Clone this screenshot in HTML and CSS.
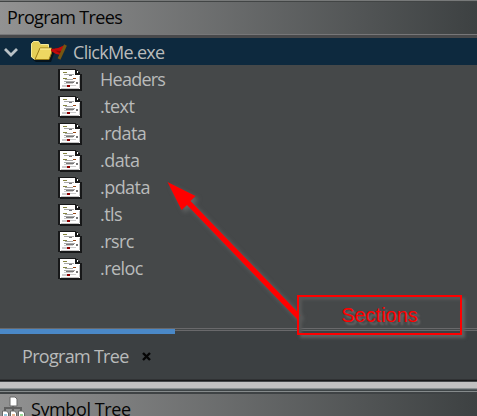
FILE: index.html
```html
<!DOCTYPE html>
<html lang="en">
<head>
<meta charset="utf-8">
<title>Program Trees</title>
<link rel="stylesheet" href="styles.css">
</head>
<body>
<svg class="defs" width="0" height="0" aria-hidden="true">
  <symbol id="doc" viewBox="0 0 24 22" shape-rendering="crispEdges">
    <path fill="#171819" d="M0 0h18v1h2v2h2v2h2v17H2v-1H0z"/>
    <path fill="#fff" d="M2 1h15v5h5v14H2z"/>
    <path fill="#fff" d="M19 2h1v2h-1z"/>
    <path fill="#c5c5c5" d="M3 19h18v1H3zM21 7h1v12h-1z"/>
    <path fill="#858440" d="M5 3h4v1H5zM5 9h4v1H5z"/>
    <path fill="#a8a8a8" d="M6 5h10v1H6zM7 10h8v1H7zM6 12h11v1H6z"/>
    <path fill="#777" d="M11 6h3v1h-3zM8 13h8v1H8zM18 13h2v2h-2z"/>
    <path fill="#ccc" d="M6 14h9v1H6zM4 16h5v2H4zM12 16h6v1h-6z"/>
    <path fill="#954615" d="M15 9h3v1h-3z"/>
    <path fill="#8e0000" d="M9 16h3v2H9z"/>
  </symbol>
</svg>
<div class="window">
  <header class="title title-top"><span class="t-program">Program Trees</span></header>
  <main class="tree">
    <div class="root">
      <svg class="chevron" width="16" height="12" viewBox="0 0 16 12"><path d="M2 3l6 6 6-6" fill="none" stroke="#b9c1c6" stroke-width="2.8"/></svg>
      <svg class="folder" width="38" height="22" viewBox="0 0 38 22">
        <path d="M2 19l3 2h15l4-11v-3z" fill="#07131b"/>
        <path d="M.5 2.500l2-2h5l2 3h8v15H4L.5 16z" fill="#e5cf57" stroke="#f6eb9b"/>
        <path d="M4 18.500L9 7h11.500v5L18 18.500z" fill="#eed761" stroke="#9a7b13"/>
        <path d="M9 8h11" stroke="#fff3a5"/>
        <path d="M20 8l7-1 7-3-4 10-5-1-5-3z" fill="#c30a0a"/>
        <path d="M24 9.500l6 3.500 1-3z" fill="#830909"/>
        <path d="M34.500 4l-6.500 14" stroke="#765711" stroke-width="3"/>
      </svg>
      <span class="t-root">ClickMe.exe</span>
    </div>
    <ul class="items">
      <li><svg class="doc"><use href="#doc"/></svg><span class="t-headers">Headers</span></li>
      <li><svg class="doc"><use href="#doc"/></svg><span>.text</span></li>
      <li><svg class="doc"><use href="#doc"/></svg><span>.rdata</span></li>
      <li><svg class="doc"><use href="#doc"/></svg><span>.data</span></li>
      <li><svg class="doc"><use href="#doc"/></svg><span>.pdata</span></li>
      <li><svg class="doc"><use href="#doc"/></svg><span>.tls</span></li>
      <li><svg class="doc"><use href="#doc"/></svg><span>.rsrc</span></li>
      <li><svg class="doc"><use href="#doc"/></svg><span>.reloc</span></li>
    </ul>
  </main>
  <div class="tab-line"><div class="tab-active"></div></div>
  <nav class="tabs">
    <span class="t-tab">Program Tree</span>
    <svg class="close" width="9" height="9" viewBox="0 0 9 9"><path d="M1 1l7 7m0-7l-7 7" stroke="#050505" stroke-width="2.4"/></svg>
  </nav>
  <div class="divider"></div>
  <footer class="title title-bottom">
    <svg class="symbols" width="24" height="24" viewBox="0 0 24 24">
      <path d="M12 9v5M4 15v-3h16v3M12 12v4" fill="none" stroke="#606060" stroke-width="2"/>
      <path d="M9 1h5l2 2v7H9z" fill="#fff" stroke="#686868"/>
      <path d="M1.500 15h4l2 2v8h-6zM9.500 15h4l2 2v8h-6zM17.500 15h4l2 2v8h-6z" fill="#fff" stroke="#686868"/>
      <path d="M3 18h3v3H3z" fill="#9bcbe3"/><path d="M11 18h3v3h-3z" fill="#e7b796"/><path d="M19 18h3v3h-3z" fill="#98d996"/>
    </svg>
    <span class="t-symbol">Symbol Tree</span>
  </footer>
  <svg class="arrow" width="477" height="416" viewBox="0 0 477 416">
    <path d="M167.500 182L195.500 196L190.500 201L301 315.500L297 319L187 205L181.500 210z" fill="red"/>
  </svg>
  <div class="callout">Sections</div>
</div>
</body>
</html>
```
FILE: styles.css
```css
* { box-sizing: border-box; }
body { margin: 0; background: #454849; font-family: "Open Sans", "Noto Sans", sans-serif; font-size: 18px; color: #b9bbbb; }
.defs { position: absolute; }
.window { position: relative; width: 477px; height: 416px; overflow: hidden; display: flex; flex-direction: column; }
.window span { white-space: nowrap; line-height: 27px; }
.title { display: flex; align-items: center; color: #050505; background: linear-gradient(90deg, #929292, #3d4142); flex: none; }
.title-top { height: 38px; padding: 0 0 1px 7px; border-top: 1px solid #777979; border-bottom: 3px solid #48494b; box-shadow: inset 0 1px #424545, inset 0 -1px #777779; }
.t-program { letter-spacing: -.65px; }
.tree { height: 290px; flex: none; background: #454849; }
.root { height: 27px; display: flex; align-items: center; background: #0d293e; padding-left: 3px; }
.chevron { margin-right: 12px; flex: none; }
.folder { margin-right: 4px; flex: none; }
.t-root { letter-spacing: -.7px; padding-top: 2px; }
.items { list-style: none; margin: 0; padding: 0 0 0 58px; }
.items li { height: 27px; display: flex; align-items: center; gap: 18px; padding-top: 3px; }
.doc { width: 24px; height: 22px; flex: none; }
.items span { letter-spacing: -.55px; margin-top: -2px; }
.items .t-headers { letter-spacing: -.75px; }
.tab-line { height: 6px; flex: none; background: linear-gradient(#69696b 0 1px, #454849 1px 2px, #69696b 2px 3px, #3c4042 3px); }
.tab-active { width: 175px; height: 5px; background: #4a88c7; transform: translateY(1px); }
.tabs { height: 45px; flex: none; display: flex; align-items: center; padding: 0 0 1px 22px; background: #3c4042; }
.t-tab { width: 107px; letter-spacing: -.7px; }
.close { margin-left: 13px; }
.divider { height: 15px; flex: none; background: linear-gradient(#303234 0 1px, #171819 1px 2px, #45484a 2px 3px, #c1c1c1 3px 9px, #8b9192 9px 10px, #555d60 10px 11px, #3e4446 11px 12px, #858a8b 12px 13px, #3e4244 13px 15px); }
.title-bottom { height: 22px; align-items: flex-start; padding-left: 1px; }
.symbols { margin: 2px 6px 0 0; flex: none; }
.title-bottom span { margin-top: 2px; letter-spacing: -.4px; }
.arrow { position: absolute; left: 0; top: 0; filter: drop-shadow(3px 3px 2px rgba(125, 125, 125, .5)); }
.callout { position: absolute; left: 297px; top: 295px; width: 165px; height: 40px; border: 2px solid red; color: red; font: 20px/37px "Liberation Sans", sans-serif; text-align: center; text-shadow: 3px 3px 2px #686868; box-shadow: 3px 3px 3px #5f6060, inset 3px 3px 3px #555757; }
```
